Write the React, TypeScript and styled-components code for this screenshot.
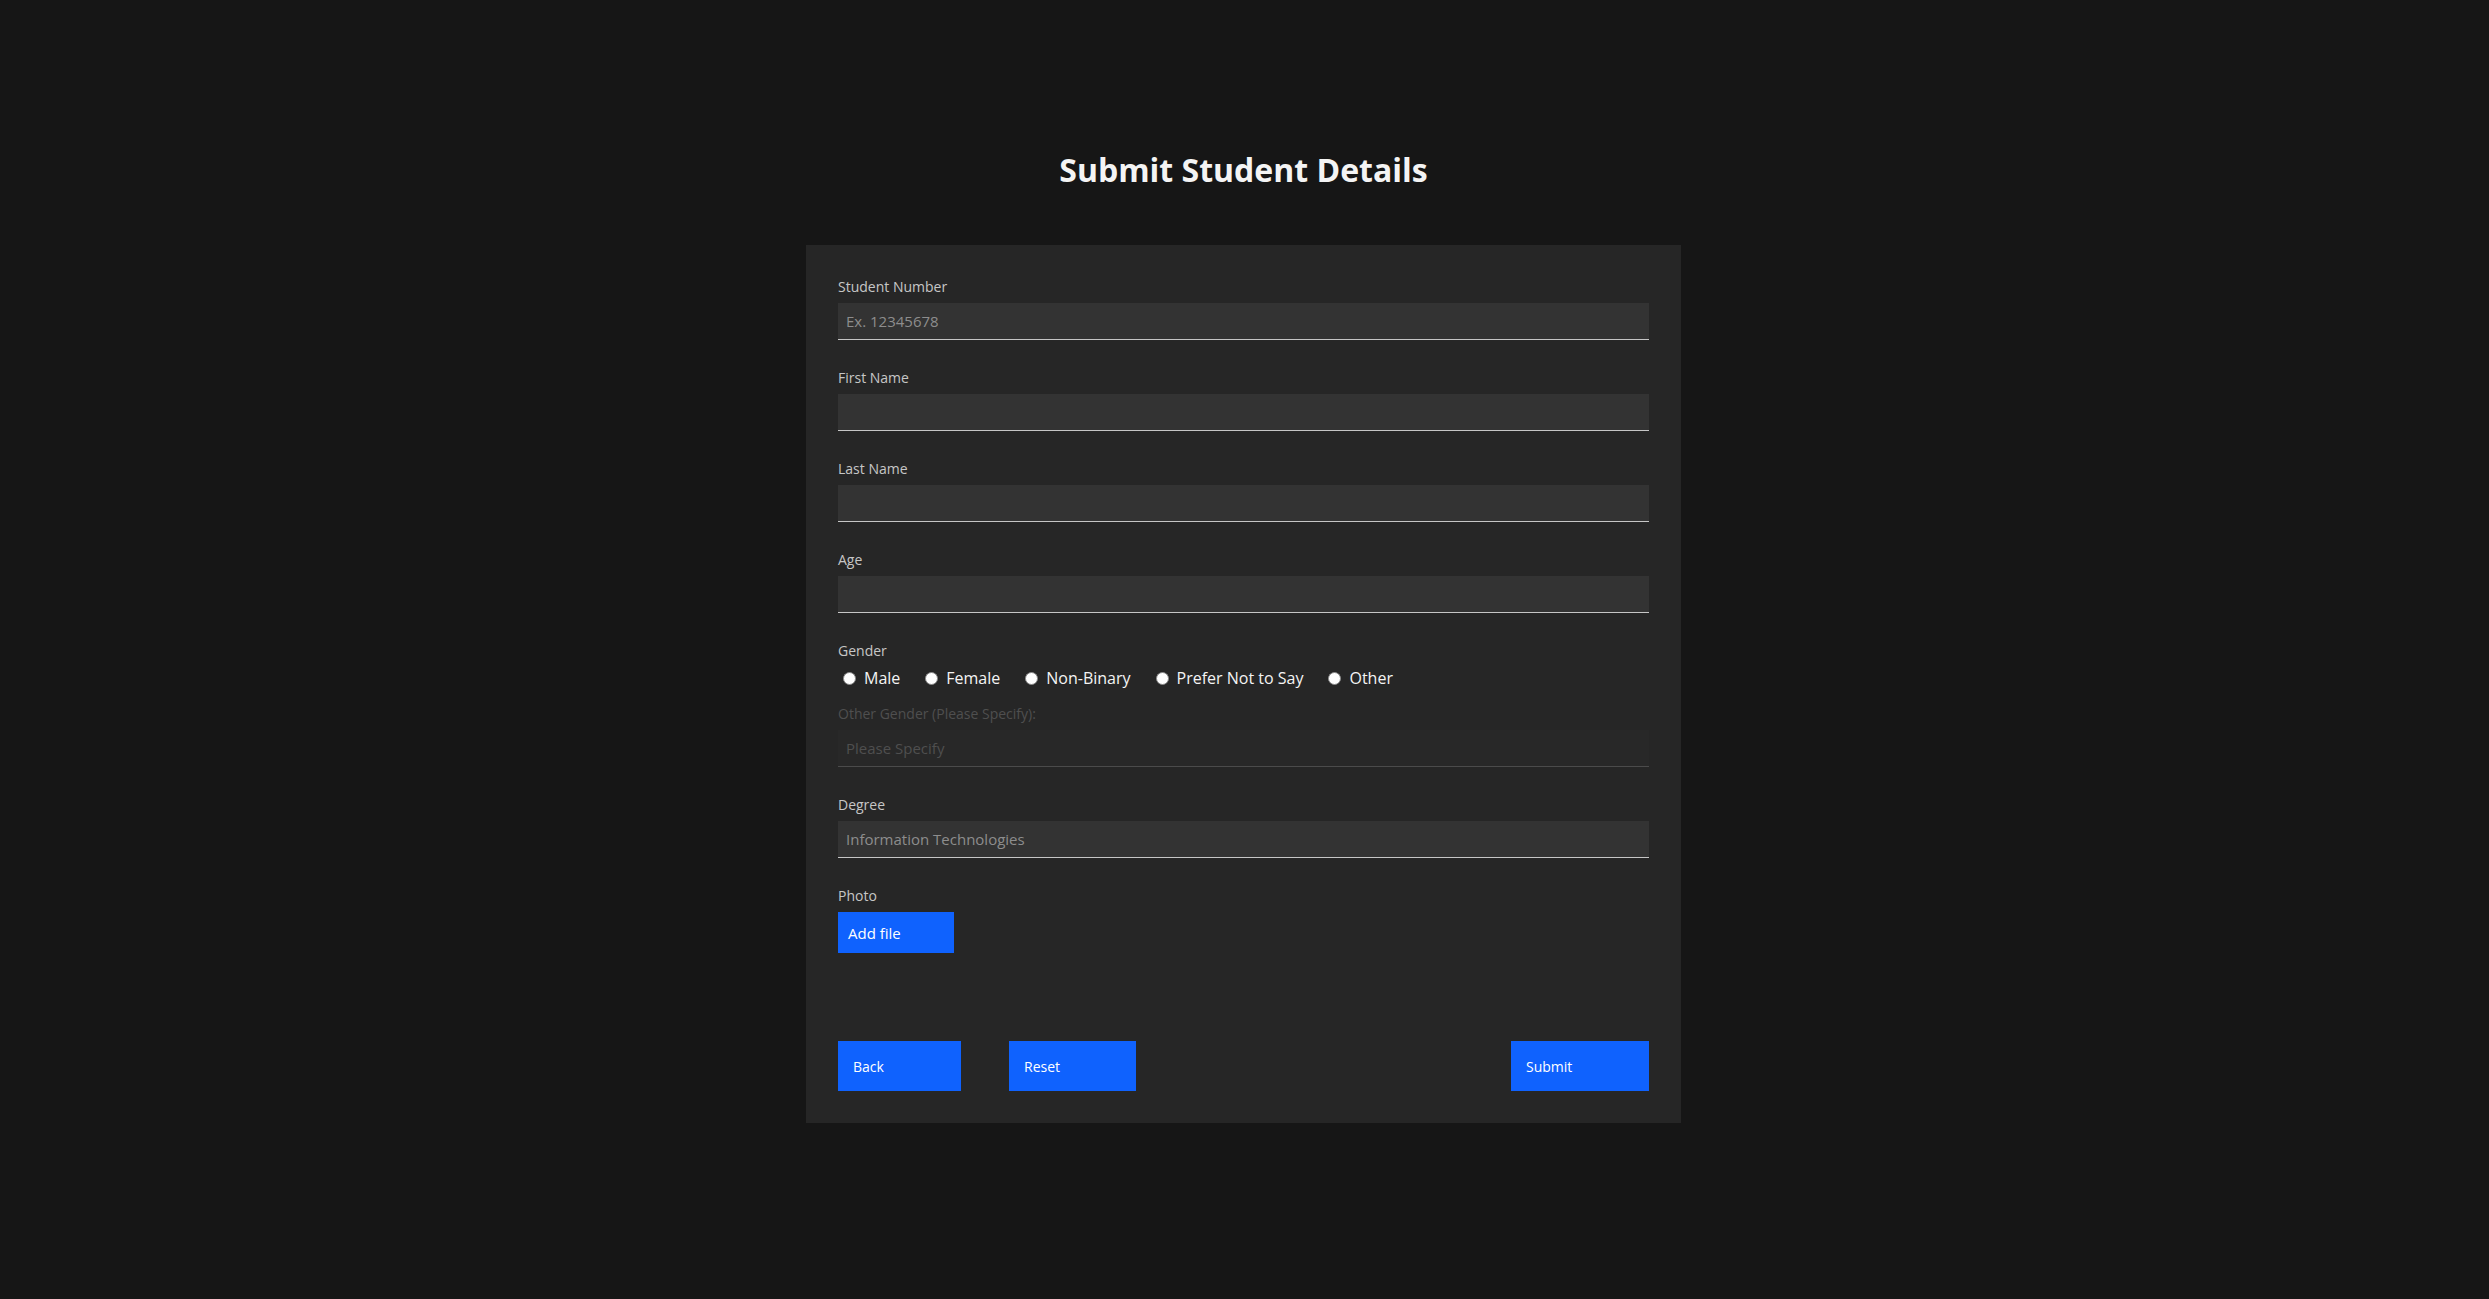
import React from 'react';
import styled, { createGlobalStyle } from 'styled-components';

const GlobalStyle = createGlobalStyle`
  html, body {
    margin: 0;
    padding: 0;
    background: #161616;
  }
  body {
    font-family: 'Open Sans', 'Noto Sans', 'Liberation Sans', sans-serif;
    color: #f4f4f4;
  }
  * {
    box-sizing: border-box;
  }
`;

const Page = styled.div`
  min-height: 1299px;
  display: flex;
  flex-direction: column;
  align-items: center;
  padding: 150px 2px 0 0;
`;

const Title = styled.h1`
  margin: 0;
  font-size: 32px;
  line-height: 40px;
  font-weight: 700;
  color: #f4f4f4;
`;

const Card = styled.form`
  margin-top: 55px;
  width: 875px;
  background: #262626;
  padding: 33px 32px 32px;
  display: flex;
  flex-direction: column;
`;

const Field = styled.div<{ $gap?: number }>`
  display: flex;
  flex-direction: column;
  margin-bottom: ${(p) => (p.$gap ?? 29)}px;
`;

const Label = styled.label<{ $disabled?: boolean }>`
  font-size: 14px;
  line-height: 18px;
  margin-bottom: 7px;
  color: ${(p) => (p.$disabled ? '#4f4f4f' : '#c6c6c6')};
`;

const Input = styled.input`
  height: 37px;
  width: 100%;
  border: none;
  border-bottom: 1px solid #c6c6c6;
  background: #333333;
  padding: 0 8px;
  font-family: inherit;
  font-size: 15px;
  color: #f4f4f4;
  outline: none;

  &::placeholder {
    color: #8d8d8d;
  }

  &:disabled {
    background: #282828;
    border-bottom-color: #4b4b4b;
  }

  &:disabled::placeholder {
    color: #4f4f4f;
  }
`;

const RadioRow = styled.div`
  display: flex;
  align-items: center;
  gap: 20px;
  height: 22px;
`;

const RadioOption = styled.label`
  display: flex;
  align-items: center;
  font-size: 16px;
  line-height: 22px;
  color: #f4f4f4;
`;

const Radio = styled.input.attrs({ type: 'radio' })`
  appearance: none;
  width: 13px;
  height: 13px;
  margin: 0 8px 0 5px;
  border-radius: 50%;
  background: #ffffff;
  border: 1px solid #8a8a8a;
`;

const FileButton = styled.button`
  align-self: flex-start;
  height: 41px;
  width: 116px;
  border: none;
  background: #0f62fe;
  color: #ffffff;
  font-family: inherit;
  font-size: 15px;
  text-align: left;
  padding: 0 10px;
`;

const Actions = styled.div`
  margin-top: 88px;
  display: flex;
  justify-content: space-between;
  align-items: center;
`;

const ButtonGroup = styled.div`
  display: flex;
  gap: 48px;
`;

const ActionButton = styled.button<{ $width: number }>`
  height: 50px;
  width: ${(p) => p.$width}px;
  border: none;
  background: #0f62fe;
  color: #ffffff;
  font-family: inherit;
  font-size: 14px;
  text-align: left;
  padding: 0 15px;
`;

const genders = ['Male', 'Female', 'Non-Binary', 'Prefer Not to Say', 'Other'];

export default function App() {
  return (
    <>
      <GlobalStyle />
      <Page>
        <Title>Submit Student Details</Title>
        <Card onSubmit={(e) => e.preventDefault()}>
          <Field>
            <Label>Student Number</Label>
            <Input placeholder="Ex. 12345678" />
          </Field>
          <Field>
            <Label>First Name</Label>
            <Input />
          </Field>
          <Field>
            <Label>Last Name</Label>
            <Input />
          </Field>
          <Field>
            <Label>Age</Label>
            <Input />
          </Field>
          <Field $gap={16}>
            <Label>Gender</Label>
            <RadioRow>
              {genders.map((g) => (
                <RadioOption key={g}>
                  <Radio name="gender" />
                  {g}
                </RadioOption>
              ))}
            </RadioRow>
          </Field>
          <Field>
            <Label $disabled>Other Gender (Please Specify):</Label>
            <Input placeholder="Please Specify" disabled />
          </Field>
          <Field>
            <Label>Degree</Label>
            <Input placeholder="Information Technologies" />
          </Field>
          <Field $gap={0}>
            <Label>Photo</Label>
            <FileButton type="button">Add file</FileButton>
          </Field>
          <Actions>
            <ButtonGroup>
              <ActionButton type="button" $width={123}>Back</ActionButton>
              <ActionButton type="reset" $width={127}>Reset</ActionButton>
            </ButtonGroup>
            <ActionButton type="submit" $width={138}>Submit</ActionButton>
          </Actions>
        </Card>
      </Page>
    </>
  );
}
